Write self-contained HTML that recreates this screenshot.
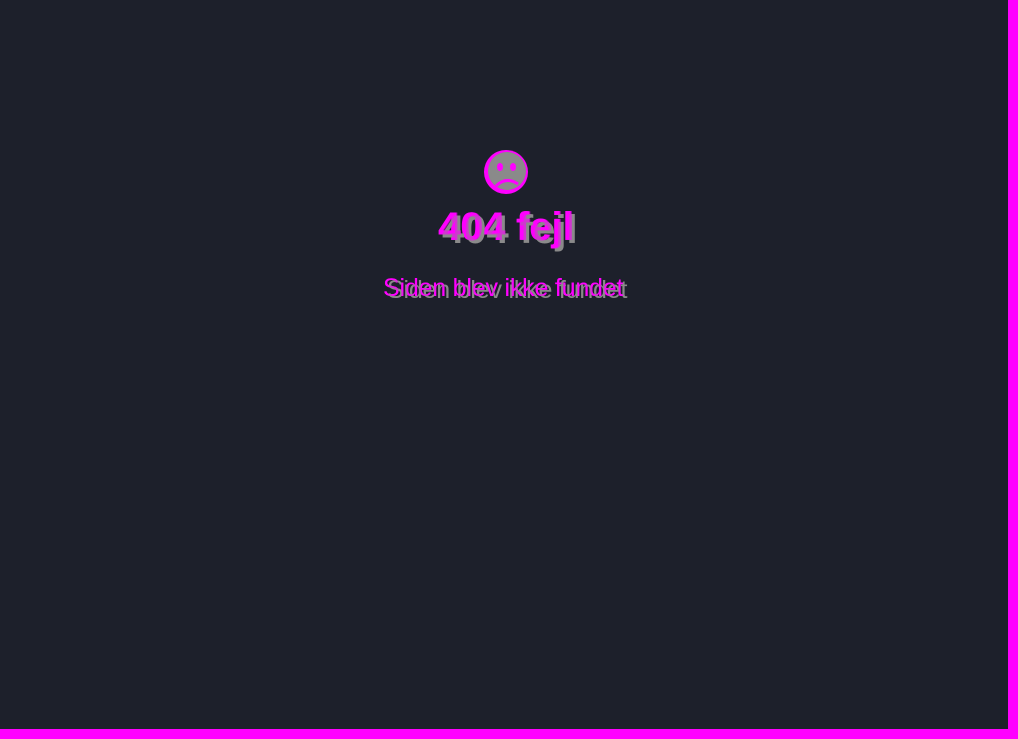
<!DOCTYPE html>
<html><head><meta charset="utf-8"><style>
html,body{margin:0;padding:0;}
body{width:1018px;height:739px;background:#1d202b;position:relative;overflow:hidden;font-family:"Liberation Sans",Arial,sans-serif;}
.rb{position:absolute;left:1008px;top:0;width:10px;height:739px;background:#ff00ff;}
.bb{position:absolute;left:0;top:729px;width:1018px;height:10px;background:#ff00ff;}
.t{position:absolute;white-space:nowrap;}
.h{font-weight:bold;font-size:40px;top:205px;}
.s{font-size:25px;top:274px;letter-spacing:-0.2px;}
.m{color:#ff00ff;}
.g{color:#8a8a8a;}
</style></head><body>
<svg style="position:absolute;left:480px;top:148px" width="54" height="48" viewBox="0 0 54 48">
<circle cx="26" cy="24" r="22" fill="#ff00ff"/>
<circle cx="27" cy="23" r="19" fill="#8a8a8a"/>
<ellipse cx="20" cy="19" rx="3" ry="4" fill="#ff00ff"/>
<ellipse cx="33" cy="19" rx="3" ry="4" fill="#ff00ff"/>
<path d="M16 38 Q26 28 38 36" stroke="#ff00ff" stroke-width="3" fill="none"/>
</svg>
<div class="t h m" style="left:438px">404 fejl</div>
<div class="t h g" style="left:442px;top:208px">404 fejl</div>
<div class="t h m" style="left:439px;opacity:.6">404 fejl</div>
<div class="t s m" style="left:383px">Siden blev ikke fundet</div>
<div class="t s g" style="left:387px;top:276px">Siden blev ikke fundet</div>
<div class="t s m" style="left:383px;opacity:.55">Siden blev ikke fundet</div>
<div class="rb"></div><div class="bb"></div>
</body></html>
